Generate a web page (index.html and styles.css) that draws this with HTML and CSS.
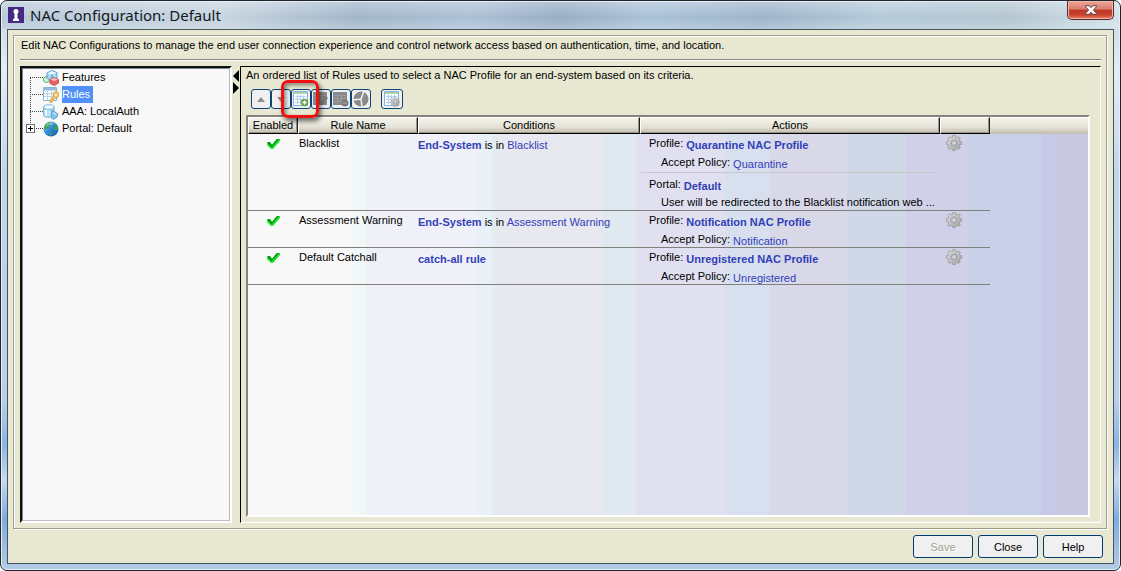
FILE: index.html
```html
<!DOCTYPE html>
<html lang="en">
<head>
<meta charset="utf-8">
<title>NAC Configuration: Default</title>
<link rel="stylesheet" href="styles.css">
</head>
<body>
<svg class="defs" aria-hidden="true">
  <defs>
    <linearGradient id="sphere" x1="0" y1="0" x2="1" y2="1"><stop offset="0" stop-color="#8fd0f4"/><stop offset=".5" stop-color="#2f8ad8"/><stop offset="1" stop-color="#1058a8"/></linearGradient>
    <linearGradient id="steel" x1="0" y1="0" x2="1" y2="1"><stop offset="0" stop-color="#e4e4e4"/><stop offset="1" stop-color="#a0a0a0"/></linearGradient>
    <symbol id="i-gear" viewBox="0 0 16 16">
      <path fill="url(#steel)" stroke="#8c8c8c" stroke-width=".7" fill-rule="evenodd" d="M6.700.6h2.600l.4 2 1 .4 1.800-1.200 1.800 1.800-1.200 1.800.4 1 2 .4v2.600l-2 .4-.4 1 1.200 1.800-1.800 1.800-1.800-1.200-1 .4-.4 2H6.700l-.4-2-1-.4-1.800 1.200-1.800-1.800 1.200-1.800-.4-1-2-.4V6.800l2-.4.4-1-1.200-1.800 1.800-1.800 1.800 1.200 1-.4zM8 5.500a2.500 2.500 0 1 0 0 5 2.500 2.500 0 0 0 0-5z"/>
      <circle cx="8" cy="8" r="3.300" fill="none" stroke="#a4a8ac" stroke-width=".9"/>
    </symbol>
    <symbol id="i-check" viewBox="0 0 14 13">
      <path fill="#20e030" d="M1 6h3l2 2 4-5 1-1h3v2L7 12H5L1 8z"/>
      <path fill="#009a10" d="M1 5h3l2 3 5-6h2L6 10H5z"/>
    </symbol>
    <symbol id="i-sheet" viewBox="0 0 16 16">
      <path fill="#f8fcff" stroke="#8cb0e0" d="M.5.500h14v14H.5z"/>
      <path fill="#a8d4a8" d="M1 1h13v2H1z"/>
      <path stroke="#b4cff0" d="M2 5.500h11M2 8.500h11M2 11.500h11M4.500 4v9M7.500 4v9M10.500 4v9"/>
    </symbol>
    <symbol id="i-sheet-off" viewBox="0 0 16 16">
      <path fill="#8a8a8a" d="M0 1h14v13H0z"/>
      <path stroke="#9c9c9c" d="M1 4.500h12M1 7.500h12M1 10.500h12M4.500 4v9M8.500 4v9"/>
    </symbol>
  </defs>
</svg>

<div class="window">
  <header class="titlebar">
    <svg class="app-icon" viewBox="0 0 16 16" aria-hidden="true"><path fill="#452a84" d="M0 0h16v16H0z"/><path fill="#fff" d="M8 2a2.500 2.500 0 0 0-2.500 2.500c0 1 .5 1.700 1 2.200V11L5 12.500V14h6v-1.500L9.500 11V6.700c.5-.5 1-1.200 1-2.200A2.500 2.500 0 0 0 8 2z"/></svg>
    <h1 class="title">NAC Configuration: Default</h1>
    <button class="win-close" type="button" aria-label="Close window"><svg viewBox="0 0 12 10"><path fill="#fff" stroke="#5a4448" d="M.7.700h3.400L6 2.700 7.900.700h3.400v1.200L8.400 5l2.900 3.100v1.200H7.900L6 7.300 4.100 9.300H.7V8.100L3.600 5 .7 1.900z"/></svg></button>
  </header>

  <div class="client">
    <main class="group">
      <p class="intro">Edit NAC Configurations to manage the end user connection experience and control network access based on authentication, time, and location.</p>
      <div class="split">
        <nav class="tree" aria-label="Configuration">
          <ul class="nodes">
            <li class="node"><span class="twig"></span>
              <svg class="node-icon" viewBox="0 0 16 16" aria-hidden="true"><circle cx="3.500" cy="9.500" r="3" fill="#d8f2d8" stroke="#48b058"/><path fill="#a8dcf4" stroke="#4a8cc4" stroke-width=".8" d="M4 3l5-2.500 5 2V8L9.500 11 4 8.500z"/><path fill="#e8f8ff" d="M4.500 3.300L9 1.200l4.300 1.500-4 1.800z"/><path stroke="#3c86c2" d="M9 4.500V8"/><path fill="#e86460" stroke="#c03c3c" stroke-width=".8" d="M7 9.500l4-2 4.500 2V13l-4 2.500L7 13.500z"/><path fill="#fcc4bc" d="M7.500 9.600l3.500-1.600 3.800 1.500-3.600 1.500z"/></svg>
              <a class="label" href="#features">Features</a></li>
            <li class="node"><span class="twig"></span>
              <svg class="node-icon" viewBox="0 0 16 16" aria-hidden="true"><path fill="#fff" stroke="#88b4d8" d="M.5.500h13v13H.5z"/><path fill="#94bce0" d="M1 1h12v2.500H1z"/><path stroke="#bcd4ea" d="M1 6.500h12M1 9.500h12M4.500 4v9M8.500 4v9"/><path fill="#f4c860" stroke="#c89438" stroke-width=".8" d="M10 7a3 3 0 1 1 4 3.500l-2 .3-3 4.500H7v-2l3.500-4z"/><circle cx="13" cy="8" r=".9" fill="#fff"/></svg>
              <a class="label selected" href="#rules" aria-current="page">Rules</a></li>
            <li class="node"><span class="twig"></span>
              <svg class="node-icon" viewBox="0 0 16 16" aria-hidden="true"><path fill="#b8e4f8" stroke="#70b0d8" d="M.6 3v8c0 3 10.400 3 10.400 0V3z"/><ellipse cx="5.800" cy="3" rx="5.200" ry="2.300" fill="#f0fbff" stroke="#78b8dc"/><path stroke="#fff" stroke-width="1.500" d="M3 6v6"/><path fill="#84c4ec" stroke="#4a94c8" stroke-width=".8" d="M9 6l6 4-1 3-4 2.500-2-2.500z"/><path stroke="#e4f6ff" d="M10 8.500l3.500 2.500"/></svg>
              <a class="label" href="#aaa">AAA: LocalAuth</a></li>
            <li class="node"><span class="twig"></span>
              <button class="expander" type="button" aria-label="Expand Portal: Default"></button>
              <svg class="node-icon" viewBox="0 0 16 16" aria-hidden="true"><circle cx="8" cy="8" r="7.500" fill="url(#sphere)"/><path fill="#3ca050" d="M2 4c1-1.500 3-2.800 4.500-3L8 3 6.500 4.500 5.500 7 3.500 8 1 8zM11 2.500l3 2.500 1 3-2 1.500-2-1L10.500 6.500l1-1zM6 12l2-.5 1 1.500-1.500 1.500z"/><path fill="#fff" opacity=".35" d="M3 4c2-3 6-3 8-1-3 0-6 1-8 3z"/></svg>
              <a class="label" href="#portal">Portal: Default</a></li>
          </ul>
        </nav>

        <div class="divider">
          <button type="button" aria-label="Collapse tree"><svg viewBox="0 0 6 12"><path d="M6 0v12L0 6z"/></svg></button>
          <button type="button" aria-label="Expand tree"><svg viewBox="0 0 6 12"><path d="M0 0v12l6-6z"/></svg></button>
        </div>

        <section class="pane">
          <p class="caption">An ordered list of Rules used to select a NAC Profile for an end-system based on its criteria.</p>
          <div class="toolbar" role="toolbar">
            <button class="tool" type="button" aria-label="Move up" disabled><svg viewBox="0 0 16 16"><path fill="#8e8e8e" d="M4 11l4-5 4 5z"/></svg></button>
            <button class="tool" type="button" aria-label="Move down" disabled><svg viewBox="0 0 16 16"><path fill="#8e8e8e" d="M4 6h8l-4 5z"/></svg></button>
            <div class="marked">
              <button class="tool" type="button" aria-label="Add rule"><svg viewBox="0 0 16 16"><use href="#i-sheet"/><circle cx="11.500" cy="11.500" r="3.700" fill="#68a048"/><path stroke="#fff" stroke-width="1.500" d="M9.500 11.500h4M11.500 9.500v4"/></svg></button>
              <span class="mark"></span>
            </div>
            <button class="tool" type="button" aria-label="Edit rule" disabled><svg viewBox="0 0 16 16"><use href="#i-sheet-off"/><path fill="#7c7c7c" d="M12 4l3 3-5 7H8v-3z"/></svg></button>
            <button class="tool" type="button" aria-label="Delete rule" disabled><svg viewBox="0 0 16 16"><use href="#i-sheet-off"/><circle cx="12" cy="12" r="3.500" fill="#7c7c7c"/><path stroke="#aaa" d="M10 12h4"/></svg></button>
            <button class="tool" type="button" aria-label="Report" disabled><svg viewBox="0 0 16 16"><circle cx="8" cy="8" r="7.500" fill="#8a8a8a"/><path fill="none" stroke="#f0f0f0" stroke-width="1.500" d="M0 9l8-1 3-8M8 8l1 8"/></svg></button>
            <button class="tool wide" type="button" aria-label="Manage"><svg viewBox="0 0 16 16"><use href="#i-sheet"/><use href="#i-gear" x="6" y="6" width="10" height="10"/></svg></button>
          </div>

          <div class="grid">
            <table class="rules">
              <colgroup><col class="c-enabled"><col class="c-name"><col class="c-cond"><col class="c-act"><col class="c-gear"><col></colgroup>
              <thead>
                <tr><th>Enabled</th><th>Rule Name</th><th>Conditions</th><th>Actions</th><th></th><th class="rest"></th></tr>
              </thead>
              <tbody>
                <tr>
                  <td class="mid"><svg class="check" role="img" aria-label="Enabled"><use href="#i-check"/></svg></td>
                  <td>Blacklist</td>
                  <td class="cond"><a class="strong" href="#c1">End-System</a> is in <a href="#c2">Blacklist</a></td>
                  <td>
                    <div class="line">Profile: <a class="strong" href="#p1">Quarantine NAC Profile</a></div>
                    <div class="line sub">Accept Policy: <a href="#p2">Quarantine</a></div>
                    <div class="portal">
                      <div class="line">Portal: <a class="strong" href="#p3">Default</a></div>
                      <div class="line note">User will be redirected to the Blacklist notification web ...</div>
                    </div>
                  </td>
                  <td><button class="gear" type="button" aria-label="Rule options"><svg><use href="#i-gear"/></svg></button></td>
                  <td class="rest"></td>
                </tr>
                <tr>
                  <td class="mid"><svg class="check" role="img" aria-label="Enabled"><use href="#i-check"/></svg></td>
                  <td>Assessment Warning</td>
                  <td class="cond"><a class="strong" href="#c3">End-System</a> is in <a href="#c4">Assessment Warning</a></td>
                  <td>
                    <div class="line">Profile: <a class="strong" href="#p4">Notification NAC Profile</a></div>
                    <div class="line sub">Accept Policy: <a href="#p5">Notification</a></div>
                  </td>
                  <td><button class="gear" type="button" aria-label="Rule options"><svg><use href="#i-gear"/></svg></button></td>
                  <td class="rest"></td>
                </tr>
                <tr>
                  <td class="mid"><svg class="check" role="img" aria-label="Enabled"><use href="#i-check"/></svg></td>
                  <td>Default Catchall</td>
                  <td class="cond"><a class="strong" href="#c5">catch-all rule</a></td>
                  <td>
                    <div class="line">Profile: <a class="strong" href="#p6">Unregistered NAC Profile</a></div>
                    <div class="line sub">Accept Policy: <a href="#p7">Unregistered</a></div>
                  </td>
                  <td><button class="gear" type="button" aria-label="Rule options"><svg><use href="#i-gear"/></svg></button></td>
                  <td class="rest"></td>
                </tr>
              </tbody>
            </table>
          </div>
        </section>
      </div>
    </main>
    <footer class="actions">
      <button class="btn" type="button" disabled>Save</button>
      <button class="btn" type="button">Close</button>
      <button class="btn" type="button">Help</button>
    </footer>
  </div>
</div>
</body>
</html>
```
FILE: styles.css
```css
* { box-sizing: border-box; }

body {
  margin: 0;
  background: #fff;
  color: #000;
  font: 11px/16px "Liberation Sans", Arial, sans-serif;
}

p, h1, ul { margin: 0; padding: 0; }
a { color: #3040b8; text-decoration: none; }
button { margin: 0; padding: 0; font: inherit; color: inherit; }
svg { display: block; }
.defs { position: absolute; width: 0; height: 0; }

/* Window frame */
.window {
  display: flex;
  flex-direction: column;
  min-height: 100vh;
  padding: 0 6px 6px;
  border: 1px solid #20262c;
  border-radius: 7px;
  background:
    linear-gradient(rgba(255, 255, 255, .3), rgba(255, 255, 255, 0) 60%, rgba(230, 240, 240, .3)) 0 0 / 100% 28px no-repeat,
    linear-gradient(100deg, #b8c8d8 0%, #c6d4e0 20%, #a2b6ca 32%, #acc0d6 42%, #98adc4 50%, #aac2d8 58%, #9db4ca 68%, #b3c9d9 78%, #b4c6d2 90%, #d3e2ea 100%) 0 0 / 100% 28px no-repeat,
    linear-gradient(#c3d3e2 0, #e2eef8 12%, #c2d6ea 30%, #b8d0ea 70%, #8ab4e2 78%, #c6daf0 84%, #80ace0 91%, #b3cbe5 100%);
  box-shadow: inset 0 0 0 1px #e3eef6;
}

.titlebar {
  display: flex;
  align-items: center;
  gap: 6px;
  height: 28px;
  padding-left: 1px;
}
.app-icon { width: 16px; height: 16px; }
.title {
  flex: 1;
  font: 400 15px/20px "Noto Sans", "Open Sans", sans-serif;
  color: #101820;
}
.win-close {
  display: flex;
  align-self: flex-start;
  align-items: center;
  justify-content: center;
  width: 47px;
  height: 19px;
  border: 1px solid #5a2828;
  border-top: 0;
  border-radius: 0 0 5px 5px;
  background: linear-gradient(#eca69a 0, #dc7c6e 45%, #bc3a26 50%, #c8402c 75%, #e48068 100%);
  box-shadow: inset 0 0 0 1px #f0b8ac;
}
.win-close svg { width: 12px; height: 10px; }

.client {
  flex: 1;
  display: flex;
  flex-direction: column;
  gap: 6px;
  padding: 5px 6px 0 5px;
  border: 1px solid #48545c;
  background: #e8e8d2;
}

.group {
  flex: 1;
  display: flex;
  flex-direction: column;
  padding: 0 5px 5px 6px;
  border: 1px solid #9c9c8c;
  box-shadow: inset 1px 1px #fff, 1px 1px #fff;
}
.intro {
  padding: 1px 1px 6px;
  border-bottom: 1px solid #84847c;
  box-shadow: 0 1px #fff;
}

.split {
  flex: 1;
  display: flex;
  margin-top: 6px;
}

/* Tree */
.tree {
  width: 212px;
  border: 2px solid;
  border-color: #101010 #fff #fff #101010;
  background: #f8f8f8;
  box-shadow: inset -1px -1px #bcbcbc, inset 1px 1px #788;
}
.nodes {
  position: relative;
  padding: 1px 0 0 8px;
  list-style: none;
}
.nodes::before {
  content: "";
  position: absolute;
  left: 8px;
  top: 9px;
  height: 52px;
  border-left: 1px dotted #444;
}
.node {
  position: relative;
  display: flex;
  align-items: center;
  height: 17px;
}
.twig {
  width: 13px;
  border-top: 1px dotted #444;
}
.expander {
  position: absolute;
  left: -4px;
  top: 4px;
  width: 9px;
  height: 9px;
  border: 1px solid #707070;
  background:
    linear-gradient(#000, #000) center / 5px 1px no-repeat,
    linear-gradient(#000, #000) center / 1px 5px no-repeat,
    #fff;
}
.node-icon { width: 16px; height: 16px; margin-right: 3px; }
.label {
  padding-right: 3px;
  line-height: 17px;
  color: #000;
}
.label.selected { background: #5090f8; color: #fff; }

.divider {
  display: flex;
  flex-direction: column;
  width: 8px;
  padding: 4px 1px 0;
}
.divider button { border: 0; background: none; }
.divider svg { width: 6px; height: 12px; }

/* Rules pane */
.pane {
  flex: 1;
  min-width: 0;
  display: flex;
  flex-direction: column;
  padding: 0 10px 5px 5px;
  border: 1px solid;
  border-color: #000 #fff #fff #000;
}
.toolbar {
  display: flex;
  height: 32px;
  padding: 6px 0 0 5px;
}
.tool {
  display: flex;
  align-items: center;
  justify-content: center;
  width: 20px;
  height: 20px;
  border: 1px solid #0c4478;
  border-radius: 3px;
  background: #f0f0f0;
}
.tool svg { width: 16px; height: 16px; }
.tool.wide { width: 22px; margin-left: 10px; }
.marked { position: relative; }
.mark {
  position: absolute;
  z-index: 1;
  left: -10px;
  top: -9px;
  width: 38px;
  height: 38px;
  border: 3px solid #f01010;
  border-radius: 7px;
  box-shadow: 2px 3px 5px rgba(0, 0, 0, .6), inset 2px 2px 4px rgba(0, 0, 0, .45);
  pointer-events: none;
}

.grid {
  flex: 1;
  border: 2px solid;
  border-color: #84847c #fff #fff #84847c;
  background: linear-gradient(90deg,
    #f8f8f8 0 12.600%, #f0f8f8 12.600% 14%, #f0f0f8 14% 27.300%,
    #e8f0f8 27.300% 29%, #e4ecf0 29% 30%, #e8e8f0 30% 42.300%,
    #e0e8f0 42.300% 46.200%, #e0e0f0 46.200% 56.800%, #d8e0f0 56.800% 62.200%,
    #d8d8e8 62.200% 71.300%, #d0d8e8 71.300% 78.300%, #d0d0e8 78.300% 85.700%,
    #c8d0e8 85.700% 94.400%, #c8c8e8 94.400% 96.400%, #c8c8e0 96.400% 100%);
}
.rules {
  width: 100%;
  table-layout: fixed;
  border-collapse: separate;
  border-spacing: 0;
}
.c-enabled { width: 50px; }
.c-name { width: 120px; }
.c-cond { width: 222px; }
.c-act { width: 300px; }
.c-gear { width: 50px; }

th {
  height: 17px;
  padding: 0;
  border: 1px solid;
  border-color: #fff #202020 #000 #fff;
  background: linear-gradient(#f4f4ec, #e4e2d6 60%, #c0bcac);
  box-shadow: inset -1px -1px #98948a;
  font-weight: 400;
  line-height: 15px;
}
th.rest { border-width: 1px 0 0; box-shadow: none; }

td {
  padding: 1px 0 0 1px;
  border-bottom: 1px solid #80807c;
  vertical-align: top;
  white-space: nowrap;
}
td.rest { border-bottom: 0; }
td.cond { padding-top: 3px; padding-left: 0; }
td.mid { padding-top: 3px; padding-left: 18px; }
.strong { font-weight: 700; }
.check { width: 14px; height: 13px; }

.line {
  display: flex;
  gap: 3px;
  height: 18px;
  padding-left: 8px;
}
.line a { padding-top: 2px; }
.line.sub { height: 17px; padding: 1px 0 0 20px; }
.line.note { height: 16px; padding-left: 20px; }
.portal {
  margin: 2px 3px 0 0;
  padding-top: 3px;
  border-top: 1px solid #c8c8c8;
}
.gear { display: block; margin-left: 5px; border: 0; background: none; }
.gear svg { width: 16px; height: 16px; }

.actions {
  display: flex;
  justify-content: flex-end;
  gap: 5px;
  padding: 0 4px 5px;
}
.btn {
  width: 60px;
  height: 23px;
  border: 1px solid #003c74;
  border-radius: 3px;
  background: #f0f0f0;
  line-height: 20px;
}
.btn:disabled { color: #a0a090; text-shadow: 1px 1px #fff; }
```
